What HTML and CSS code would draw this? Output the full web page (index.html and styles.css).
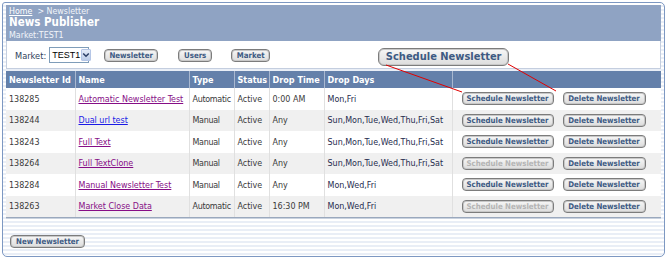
FILE: index.html
```html
<!DOCTYPE html>
<html>
<head>
<meta charset="utf-8">
<link rel="stylesheet" href="styles.css">
</head>
<body>
<div class="frame">
  <div class="banner">
    <div class="crumbs"><a href="#" class="home">Home</a>&nbsp; &gt; Newsletter</div>
    <div class="title">News Publisher</div>
    <div class="market">Market:TEST1</div>
  </div>
  <div class="toolbar">
    <span class="lbl">Market:</span>
    <span class="select"><span class="sel-text">TEST1</span><span class="sel-arrow"><svg width="8" height="8" viewBox="0 0 8 8"><path d="M1.2 2.5 L4 5.3 L6.8 2.5" fill="none" stroke="#2b3f66" stroke-width="1.5"/></svg></span></span>
    <button class="btn nav-news">Newsletter</button>
    <button class="btn nav-users">Users</button>
    <button class="btn nav-market">Market</button>
    <button class="btn big">Schedule Newsletter</button>
  </div>
  <table class="grid">
    <colgroup>
      <col class="w-id"><col class="w-name"><col class="w-type"><col class="w-status"><col class="w-time"><col class="w-days"><col class="w-act">
    </colgroup>
    <thead>
      <tr><th>Newsletter Id</th><th>Name</th><th>Type</th><th>Status</th><th>Drop Time</th><th>Drop Days</th><th></th></tr>
    </thead>
    <tbody>
      <tr><td>138285</td><td><a href="#" class="v">Automatic Newsletter Test</a></td><td class="type">Automatic</td><td>Active</td><td>0:00 AM</td><td class="days">Mon,Fri</td><td class="acts"><button class="btn sm sch">Schedule Newsletter</button><button class="btn sm del">Delete Newsletter</button></td></tr>
      <tr class="alt"><td>138244</td><td><a href="#" class="u">Dual url test</a></td><td class="type">Manual</td><td>Active</td><td>Any</td><td class="days">Sun,Mon,Tue,Wed,Thu,Fri,Sat</td><td class="acts"><button class="btn sm sch">Schedule Newsletter</button><button class="btn sm del">Delete Newsletter</button></td></tr>
      <tr><td>138243</td><td><a href="#" class="v">Full Text</a></td><td class="type">Manual</td><td>Active</td><td>Any</td><td class="days">Sun,Mon,Tue,Wed,Thu,Fri,Sat</td><td class="acts"><button class="btn sm sch">Schedule Newsletter</button><button class="btn sm del">Delete Newsletter</button></td></tr>
      <tr class="alt"><td>138264</td><td><a href="#" class="v">Full TextClone</a></td><td class="type">Manual</td><td>Active</td><td>Any</td><td class="days">Sun,Mon,Tue,Wed,Thu,Fri,Sat</td><td class="acts"><button class="btn sm sch dis">Schedule Newsletter</button><button class="btn sm del">Delete Newsletter</button></td></tr>
      <tr><td>138284</td><td><a href="#" class="v">Manual Newsletter Test</a></td><td class="type">Manual</td><td>Active</td><td>Any</td><td class="days">Mon,Wed,Fri</td><td class="acts"><button class="btn sm sch">Schedule Newsletter</button><button class="btn sm del">Delete Newsletter</button></td></tr>
      <tr class="alt"><td>138263</td><td><a href="#" class="v">Market Close Data</a></td><td class="type">Automatic</td><td>Active</td><td>16:30 PM</td><td class="days">Mon,Wed,Fri</td><td class="acts"><button class="btn sm sch dis">Schedule Newsletter</button><button class="btn sm del">Delete Newsletter</button></td></tr>
    </tbody>
  </table>
  <div class="footer">
    <button class="btn newbtn">New Newsletter</button>
  </div>
</div>
<svg class="callout" width="667" height="260" viewBox="0 0 667 260">
  <line x1="386" y1="65" x2="462" y2="92" stroke="#e00000" stroke-width="1"/>
  <line x1="508" y1="64" x2="556" y2="91" stroke="#e00000" stroke-width="1"/>
</svg>
</body>
</html>
```

FILE: styles.css
```css
html, body {
  margin: 0;
  padding: 0;
  background: #ffffff;
  font-family: "DejaVu Sans Condensed", "DejaVu Sans", Verdana, sans-serif;
  font-size: 9px;
  color: #333333;
}
body {
  position: relative;
  width: 667px;
  height: 260px;
  overflow: hidden;
}
.frame {
  margin: 2px 0 0 2px;
  width: 663px;
  height: 255px;
  border: 1px solid #7d98c2;
  border-radius: 3px 5px 5px 5px;
  padding: 2px 3px 0 3px;
  box-sizing: border-box;
  background: repeating-linear-gradient(to bottom, #ffffff 0px, #ffffff 2px, #e9eef6 2px, #e9eef6 4px);
  display: flex;
  flex-direction: column;
}
.banner {
  background: #8fa3c3;
  color: #ffffff;
  padding: 1px 3px 0 3px;
  height: 36px;
  box-sizing: border-box;
}
.crumbs {
  font-size: 8.8px;
  line-height: 10px;
  color: #f2f5fa;
}
.crumbs a.home {
  color: #ffffff;
  text-decoration: underline;
}
.title {
  font-weight: bold;
  font-size: 11.5px;
  line-height: 13px;
}
.market {
  font-size: 8.8px;
  line-height: 11px;
  margin-top: 1px;
  color: #f2f5fa;
}
.toolbar {
  background: #ffffff;
  height: 28px;
  box-sizing: border-box;
  border: 1px solid #c4cedf;
  border-top: none;
  display: flex;
  align-items: center;
  padding: 2px 0 0 8px;
}
.lbl {
  font-size: 9.2px;
  color: #2f3f5c;
  margin-right: 3px;
}
.select {
  display: inline-flex;
  align-items: stretch;
  width: 40px;
  height: 16px;
  border: 1px solid #7f9db9;
  box-sizing: border-box;
  background: #ffffff;
  margin-top: -1px;
}
.sel-text {
  flex: 1;
  font-family: "Liberation Sans", Arial, sans-serif;
  font-size: 9px;
  line-height: 14px;
  padding: 0 0 0 2px;
  color: #000000;
}
.sel-arrow {
  width: 12px;
  margin: 1px;
  background: linear-gradient(#e4ecf8, #bccde8);
  border: 1px solid #b5c6e6;
  border-radius: 1px;
  display: flex;
  align-items: center;
  justify-content: center;
  box-sizing: border-box;
}
.btn {
  font-family: "DejaVu Sans Condensed", "DejaVu Sans", Verdana, sans-serif;
  font-weight: bold;
  font-size: 7.8px;
  color: #3d5a83;
  background: linear-gradient(#f7f7f7, #dcdcdc);
  border: 1px solid #7c7c7c;
  box-shadow: inset 0 0 0 1px #c8c8c8;
  border-radius: 4px;
  height: 13px;
  padding: 0;
  line-height: 11px;
  box-sizing: border-box;
  cursor: default;
  white-space: nowrap;
  text-align: center;
}
.nav-news { margin-left: 15px; width: 54px; }
.nav-users { margin-left: 20px; width: 34px; }
.nav-market { margin-left: 19px; width: 39px; }
.big {
  margin-left: 108px;
  width: 131px;
  height: 18px;
  font-size: 11px;
  border-radius: 6px;
  line-height: 16px;
  margin-top: 3px;
}
.grid {
  margin-top: 2px;
  border-collapse: collapse;
  table-layout: fixed;
  width: 655px;
  background: #ffffff;
  box-shadow: 0 1px 0 #9aa8bd, 0 2px 0 #c9d2df;
}
.w-id { width: 69px; }
.w-name { width: 114px; }
.w-type { width: 45px; }
.w-status { width: 35px; }
.w-time { width: 55px; }
.w-days { width: 128px; }
.w-act { width: 209px; }
.grid th {
  background: #6480aa;
  color: #ffffff;
  font-weight: bold;
  text-align: left;
  height: 17px;
  padding: 0 3px;
  border-left: 1px solid #a9b8d0;
  font-size: 9px;
  white-space: nowrap;
  overflow: hidden;
}
.grid th:first-child { border-left: none; }
.grid td {
  height: 21.5px;
  padding: 0 3px;
  border-left: 1px solid #e0e0e0;
  white-space: nowrap;
  color: #3a3a3a;
  font-size: 8.9px;
}
.grid td:first-child { border-left: none; }
.grid tr.alt td { background: #f0f0f0; }
.grid td.type { letter-spacing: -0.3px; }
.grid td.days { color: #262c4e; }
.grid a.v { color: #860d86; }
.grid a.u { color: #1a1ae6; }
.grid td.acts {
  padding-left: 9px;
}
.btn.sm { vertical-align: middle; }
.sch { width: 92px; }
.del { width: 83px; margin-left: 9px; }
.dis { color: #b4b4b4; }
.footer {
  padding: 18px 0 0 4px;
}
.newbtn { width: 75px; }
.callout {
  position: absolute;
  left: 0;
  top: 0;
  pointer-events: none;
}
```
